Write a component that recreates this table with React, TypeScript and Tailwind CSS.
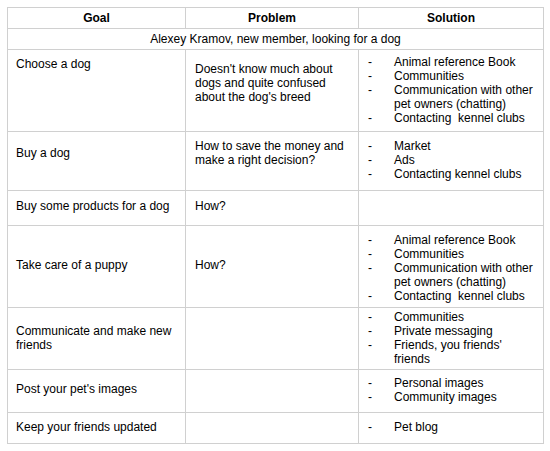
import type { ReactNode } from 'react';

type Row = {
  h: string;
  goal: ReactNode;
  goalPad: string;
  problem?: ReactNode;
  problemPad?: string;
  solution?: ReactNode[];
  solutionPad?: string;
};

const rows: Row[] = [
  {
    h: 'h-[82px]',
    goal: 'Choose a dog',
    goalPad: 'pt-[7px]',
    problem: <>Doesn't know much about<br />dogs and quite confused<br />about the dog's breed</>,
    problemPad: 'pt-[12px]',
    solution: [
      'Animal reference Book',
      'Communities',
      <>Communication with other<br />pet owners (chatting)</>,
      'Contacting  kennel clubs',
    ],
    solutionPad: 'pt-[5px]',
  },
  {
    h: 'h-[59px]',
    goal: 'Buy a dog',
    goalPad: 'pt-[14px]',
    problem: <>How to save the money and<br />make a right decision?</>,
    problemPad: 'pt-[7px]',
    solution: ['Market', 'Ads', 'Contacting kennel clubs'],
    solutionPad: 'pt-[7px]',
  },
  {
    h: 'h-[35px]',
    goal: 'Buy some products for a dog',
    goalPad: 'pt-[8px]',
    problem: 'How?',
    problemPad: 'pt-[8px]',
  },
  {
    h: 'h-[82px]',
    goal: 'Take care of a puppy',
    goalPad: 'pt-[32px]',
    problem: 'How?',
    problemPad: 'pt-[32px]',
    solution: [
      'Animal reference Book',
      'Communities',
      <>Communication with other<br />pet owners (chatting)</>,
      'Contacting  kennel clubs',
    ],
    solutionPad: 'pt-[7px]',
  },
  {
    h: 'h-[62px]',
    goal: <>Communicate and make new<br />friends</>,
    goalPad: 'pt-[16px]',
    solution: ['Communities', 'Private messaging', <>Friends, you friends'<br />friends</>],
    solutionPad: 'pt-[2px]',
  },
  {
    h: 'h-[43px]',
    goal: "Post your pet's images",
    goalPad: 'pt-[12px]',
    solution: ['Personal images', 'Community images'],
    solutionPad: 'pt-[6px]',
  },
  {
    h: 'h-[31px]',
    goal: 'Keep your friends updated',
    goalPad: 'pt-[7px]',
    solution: ['Pet blog'],
    solutionPad: 'pt-[7px]',
  },
];

const cell = 'border-r border-b border-[#d0d0d0]';

function DashList({ items }: { items: ReactNode[] }) {
  return (
    <ul>
      {items.map((item, i) => (
        <li key={i} className="flex">
          <span className="w-[26px] shrink-0">-</span>
          <span>{item}</span>
        </li>
      ))}
    </ul>
  );
}

export default function App() {
  return (
    <div className="min-h-[451px] w-[550px] bg-white pt-[7px] pl-[7px] text-[12px] leading-[14px] text-black font-['Liberation_Sans',Arial,sans-serif]">
      <div className="grid w-[537px] grid-cols-[178px_173px_185px] border-t border-l border-[#d0d0d0]">
        {/* header */}
        {['Goal', 'Problem', 'Solution'].map(title => (
          <div key={title} className={`${cell} flex h-[21px] items-center justify-center font-bold`}>
            {title}
          </div>
        ))}
        <div className={`${cell} col-span-3 flex h-[21px] items-center justify-center pb-[1px]`}>
          Alexey Kramov, new member, looking for a dog
        </div>

        {rows.map((row, i) => (
          <div key={i} className="contents">
            <div className={`${cell} ${row.h} ${row.goalPad} whitespace-nowrap pl-[8px]`}>{row.goal}</div>
            <div className={`${cell} ${row.h} ${row.problemPad ?? ''} whitespace-nowrap pl-[9px]`}>{row.problem}</div>
            <div className={`${cell} ${row.h} ${row.solutionPad ?? ''} whitespace-pre pl-[9px]`}>
              {row.solution && <DashList items={row.solution} />}
            </div>
          </div>
        ))}
      </div>
    </div>
  );
}
